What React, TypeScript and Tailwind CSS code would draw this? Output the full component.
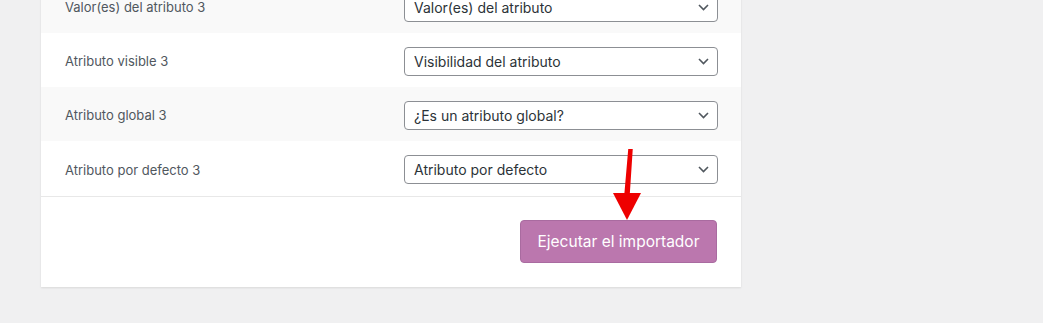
import React from 'react';

const rows = [
  { label: 'Valor(es) del atributo 3', value: 'Valor(es) del atributo' },
  { label: 'Atributo visible 3', value: 'Visibilidad del atributo' },
  { label: 'Atributo global 3', value: '¿Es un atributo global?' },
  { label: 'Atributo por defecto 3', value: 'Atributo por defecto' },
];

function FakeSelect({ value }: { value: string }) {
  return (
    <div className="relative mt-[2px] w-[314px] h-[29px]">
      <select
        className="w-full h-full appearance-none rounded-[4px] border border-[#8c8f94] bg-white pl-[9px] pr-8 text-[14px] text-[#2c3338] outline-none"
        defaultValue={value}
      >
        <option>{value}</option>
      </select>
      {/* chevron */}
      <svg
        className="pointer-events-none absolute right-[9px] top-[11px]"
        width="11"
        height="7"
        viewBox="0 0 11 7"
        fill="none"
      >
        <path d="M1 1l4.5 4.5L10 1" stroke="#50575e" strokeWidth="1.6" />
      </svg>
    </div>
  );
}

export default function App() {
  return (
    <div className="min-h-[323px] overflow-hidden bg-[#f0f0f1] font-['Inter','Liberation_Sans',sans-serif]">
      <div className="ml-[41px] mt-[-21px] w-[700px] bg-white shadow-[0_1px_2px_rgba(0,0,0,0.1)]">
        {rows.map((row, i) => (
          <div
            key={row.label}
            className={
              'flex items-center ' +
              (i === rows.length - 1 ? 'h-[55px] ' : 'h-[54px] ') +
              (i % 2 === 0 ? 'bg-[#f9f9f9]' : 'bg-white')
            }
          >
            <div className="mt-[4px] w-[363px] pl-6 text-[13px] text-[#50575e]">{row.label}</div>
            <FakeSelect value={row.value} />
          </div>
        ))}

        <div className="relative flex justify-end border-t border-[#e8e8e8] px-6 pt-[23px] pb-6">
          <button className="h-[43px] w-[197px] rounded-[4px] border border-[#a96ba0] bg-[#bb77ae] text-[15.5px] text-white">
            Ejecutar el importador
          </button>

          {/* red annotation arrow */}
          <svg
            className="pointer-events-none absolute left-[571px] top-[-48px]"
            width="30"
            height="72"
            viewBox="0 0 30 72"
          >
            <path d="M17.5 0 L19.5 0 L16.5 46 L13.5 46 Z" fill="#ee0000" stroke="#ee0000" strokeWidth="2.5" />
            <path d="M1 44 L29 44 L15 71 Z" fill="#ee0000" />
          </svg>
        </div>
      </div>
    </div>
  );
}
